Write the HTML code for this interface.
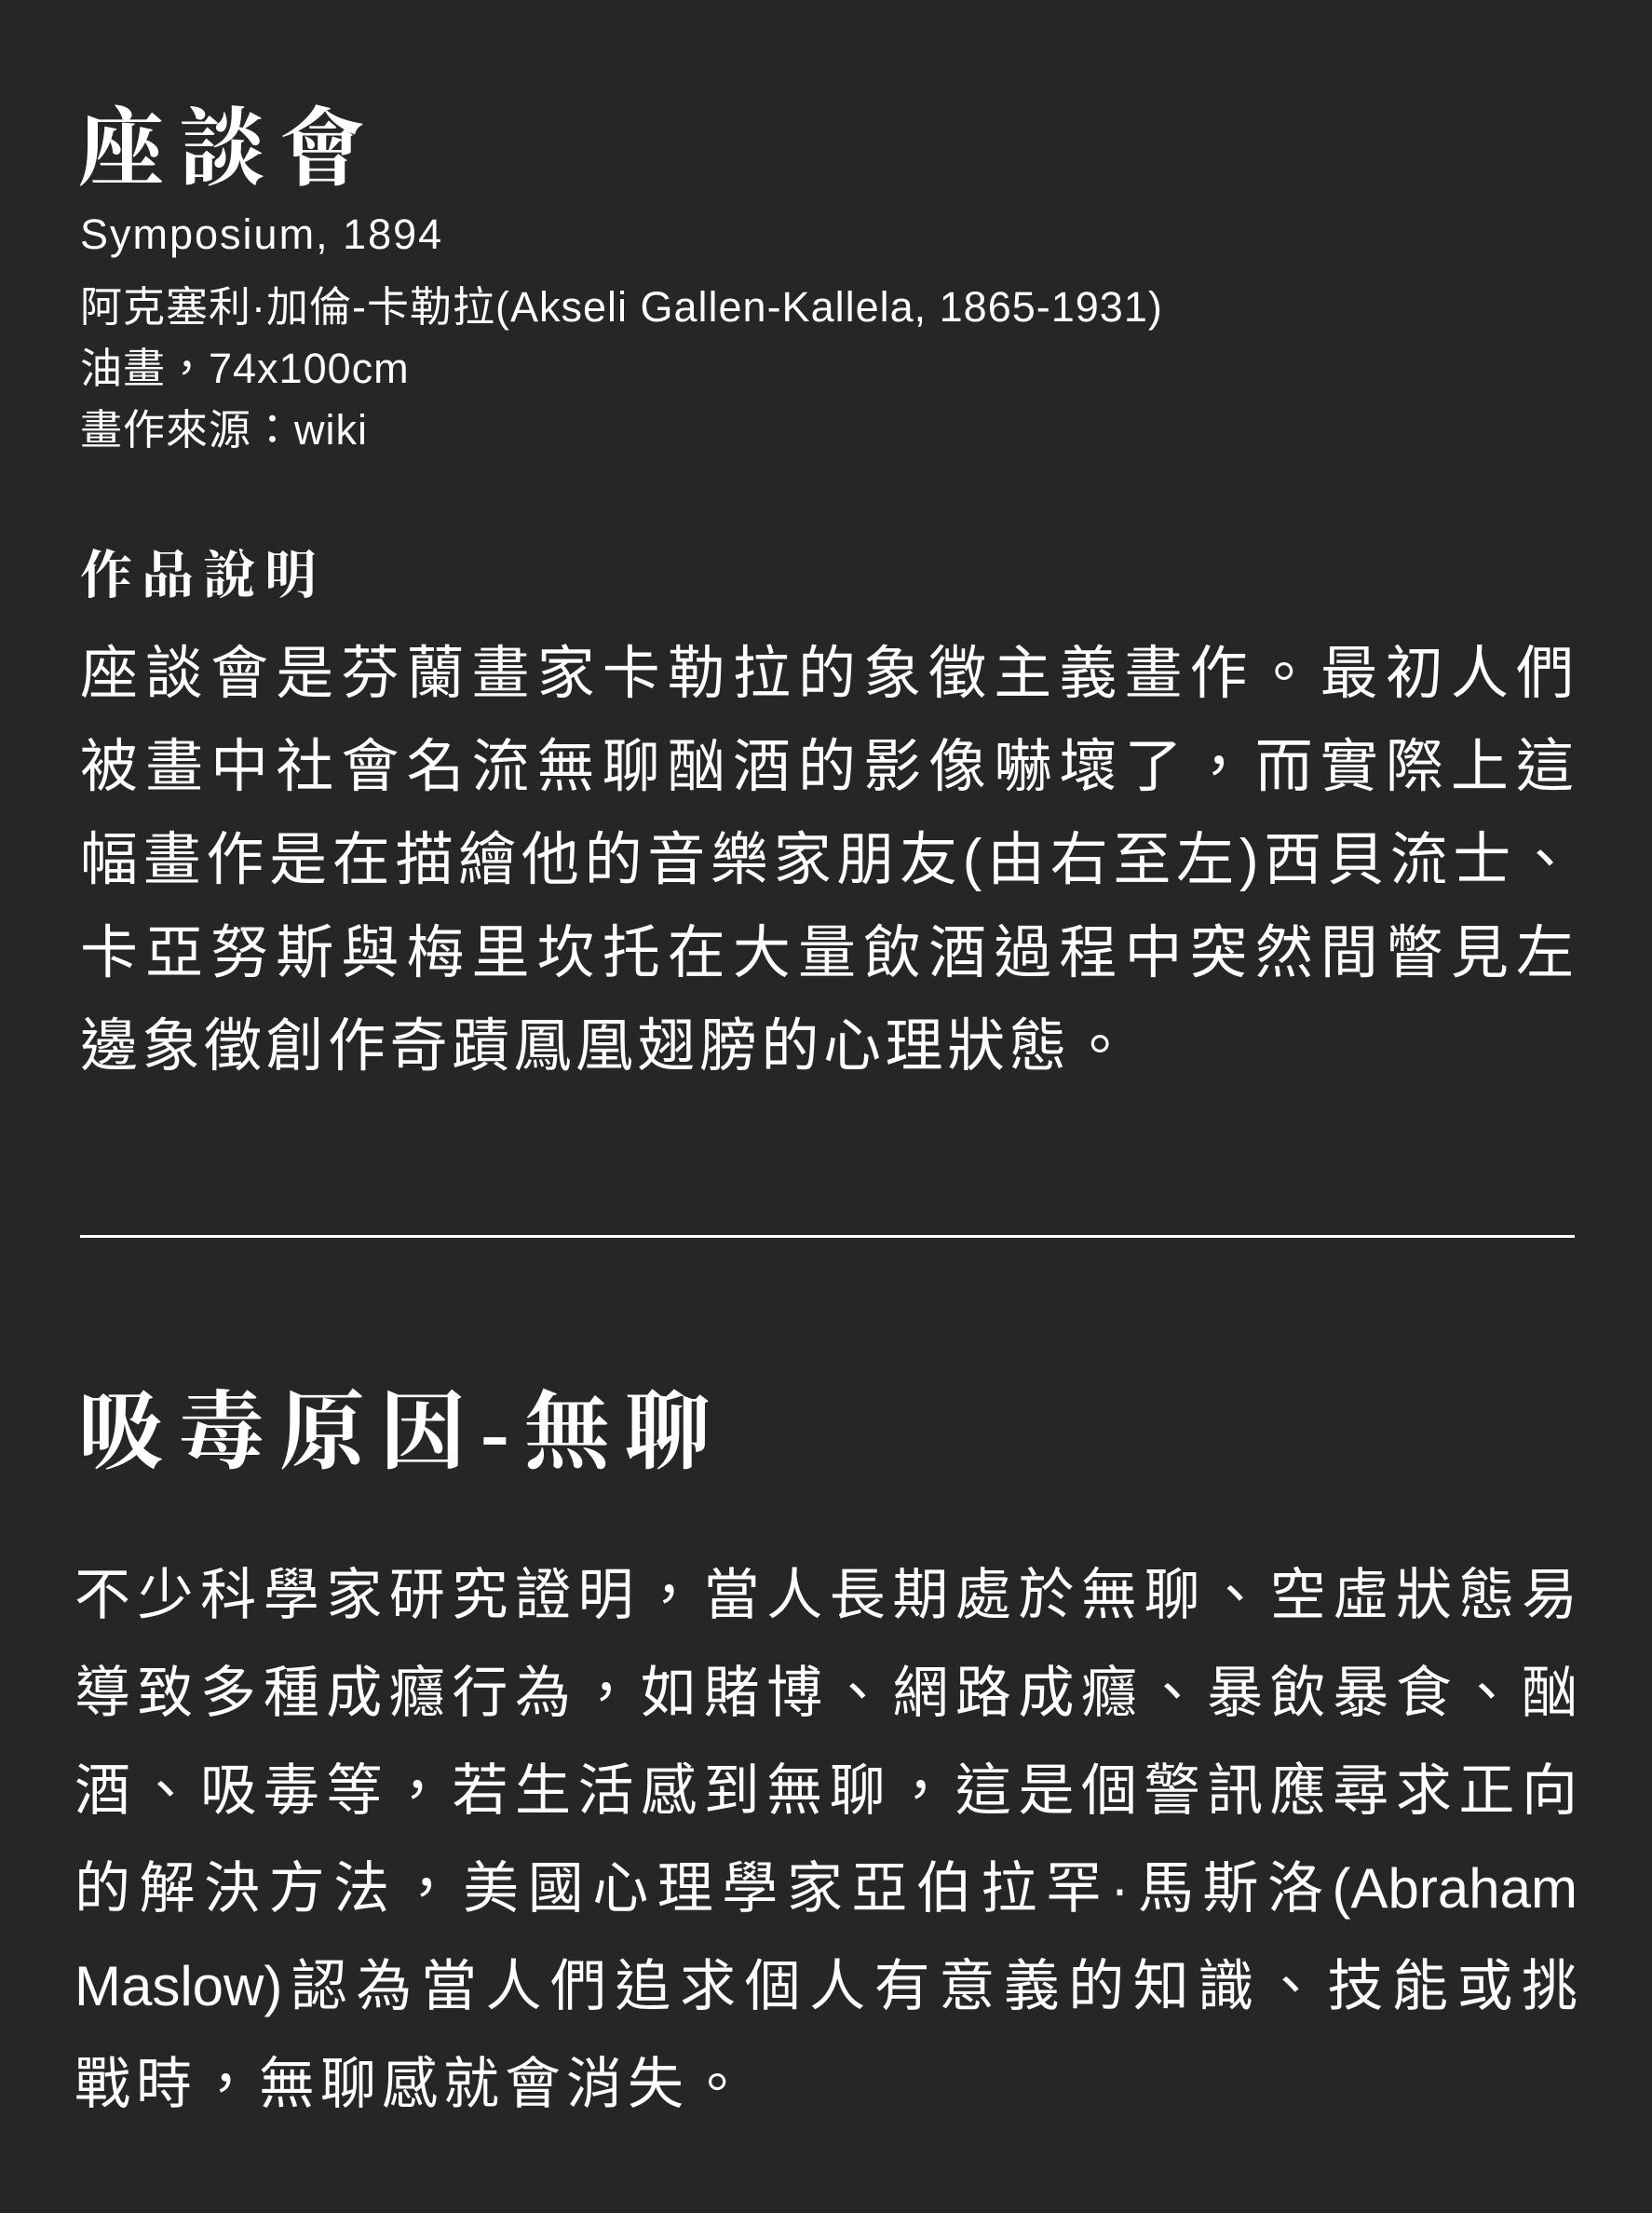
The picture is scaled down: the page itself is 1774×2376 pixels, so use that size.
<!DOCTYPE html>
<html><head><meta charset="utf-8"><style>
html,body{margin:0;padding:0;background:#282625;}
body{width:1774px;height:2376px;position:relative;overflow:hidden;color:#fff;font-family:"Liberation Sans","Noto Sans CJK TC",sans-serif;}
.a{position:absolute;white-space:nowrap;}
.serif{font-family:"Liberation Serif","Noto Serif CJK SC",serif;font-weight:700;}
.j{text-align:justify;text-align-last:justify;}
.p1 div{height:100px;line-height:100px;font-size:62px;width:1604px;}
.p2 div{height:105px;line-height:105px;font-size:60px;width:1614px;}
.m{font-size:45px;letter-spacing:1px;}
</style></head><body>
<div class="a serif" style="left:84px;top:100px;font-size:92px;line-height:120px;letter-spacing:16px;">座談會</div>
<div class="a m" style="left:86px;top:226px;line-height:52px;letter-spacing:2px;">Symposium, 1894</div>
<div class="a m" style="left:86px;top:302px;line-height:56px;">阿克塞利·加倫-卡勒拉(Akseli Gallen-Kallela, 1865-1931)</div>
<div class="a m" style="left:86px;top:368px;line-height:56px;">油畫，74x100cm</div>
<div class="a m" style="left:86px;top:434px;line-height:56px;">畫作來源：wiki</div>
<div class="a serif" style="left:86px;top:584px;font-size:56px;line-height:70px;letter-spacing:10px;">作品說明</div>
<div class="a p1" style="left:86px;top:674px;">
<div class="j">座談會是芬蘭畫家卡勒拉的象徵主義畫作。最初人們</div>
<div class="j">被畫中社會名流無聊酗酒的影像嚇壞了，而實際上這</div>
<div class="j">幅畫作是在描繪他的音樂家朋友(由右至左)西貝流士、</div>
<div class="j">卡亞努斯與梅里坎托在大量飲酒過程中突然間瞥見左</div>
<div style="letter-spacing:4.5px;">邊象徵創作奇蹟鳳凰翅膀的心理狀態。</div>
</div>
<div class="a" style="left:86px;top:1326px;width:1605px;height:3px;background:#fff;"></div>
<div class="a serif" style="left:84px;top:1478px;font-size:92px;line-height:120px;letter-spacing:16px;">吸毒原因-無聊</div>
<div class="a p2" style="left:80px;top:1660px;">
<div class="j">不少科學家研究證明，當人長期處於無聊、空虛狀態易</div>
<div class="j">導致多種成癮行為，如賭博、網路成癮、暴飲暴食、酗</div>
<div class="j">酒、吸毒等，若生活感到無聊，這是個警訊應尋求正向</div>
<div class="j">的解決方法，美國心理學家亞伯拉罕·馬斯洛(Abraham</div>
<div class="j">Maslow)認為當人們追求個人有意義的知識、技能或挑</div>
<div style="letter-spacing:6px;">戰時，無聊感就會消失。</div>
</div>
</body></html>
